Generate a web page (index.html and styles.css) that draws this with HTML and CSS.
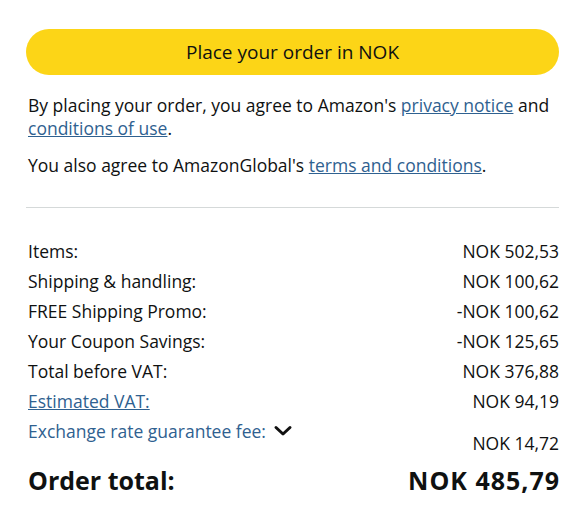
FILE: index.html
```html
<!DOCTYPE html>
<html lang="en">
<head>
    <meta charset="UTF-8">
    <meta name="viewport" content="width=device-width, initial-scale=1.0">
    <title>Place your order</title>
    <link rel="stylesheet" href="styles.css">
</head>
<body>
    <div class="checkout">
        <button class="place-order">Place your order in NOK</button>

        <p class="legal">By placing your order, you agree to Amazon's <a href="#">privacy notice</a> and <a href="#">conditions of use</a>.</p>
        <p class="legal">You also agree to AmazonGlobal's <a href="#">terms and conditions</a>.</p>

        <hr class="divider">

        <div class="summary">
            <div class="row"><span>Items:</span><span>NOK 502,53</span></div>
            <div class="row"><span>Shipping &amp; handling:</span><span>NOK 100,62</span></div>
            <div class="row"><span>FREE Shipping Promo:</span><span>-NOK 100,62</span></div>
            <div class="row"><span>Your Coupon Savings:</span><span>-NOK 125,65</span></div>
            <div class="row"><span>Total before VAT:</span><span>NOK 376,88</span></div>
            <div class="row"><a href="#">Estimated VAT:</a><span>NOK 94,19</span></div>
            <div class="row fee">
                <span class="fee-label">Exchange rate guarantee fee:
                    <svg class="chevron" width="20" height="12" viewBox="0 0 20 12"><path d="M3 2.5 L10 9 L17 2.5" fill="none" stroke="#111" stroke-width="3" stroke-linecap="round" stroke-linejoin="round"/></svg>
                </span>
                <span class="fee-value">NOK 14,72</span>
            </div>
            <div class="row total"><span>Order total:</span><span class="total-value">NOK 485,79</span></div>
        </div>
    </div>
</body>
</html>
```

FILE: styles.css
```css
body {
    margin: 0;
    padding: 0;
    background: #ffffff;
    color: #0f1111;
    font-family: 'Open Sans', 'Noto Sans', sans-serif;
    font-size: 17.5px;
}

.checkout {
    padding: 29px 18px 0 26px;
}

.place-order {
    display: block;
    width: 100%;
    height: 46px;
    border: none;
    border-radius: 23px;
    background: #fcd517;
    color: #0f1111;
    font-family: inherit;
    font-size: 19px;
    cursor: pointer;
}

.legal {
    margin: 0;
    padding-left: 2px;
    line-height: 23px;
}

.legal:first-of-type {
    margin-top: 19px;
}

.legal + .legal {
    margin-top: 14px;
}

a {
    color: #2f6190;
    text-decoration: underline;
}

.divider {
    border: none;
    border-top: 1px solid #d5d9d9;
    margin: 30px 0 0;
}

.summary {
    padding: 28px 0 0 2px;
}

.row {
    display: flex;
    justify-content: space-between;
    line-height: 30px;
}

.fee {
    line-height: 22px;
    padding-top: 4px;
}

.fee-label {
    align-self: flex-start;
    color: #2f6190;
    display: flex;
    align-items: center;
    gap: 7px;
}

.fee-value {
    padding-top: 12px;
}

.total {
    font-size: 25px;
    font-weight: bold;
    line-height: 36px;
    margin-top: 8px;
}

.total-value {
    letter-spacing: 1px;
    margin-right: -1px;
}
```
